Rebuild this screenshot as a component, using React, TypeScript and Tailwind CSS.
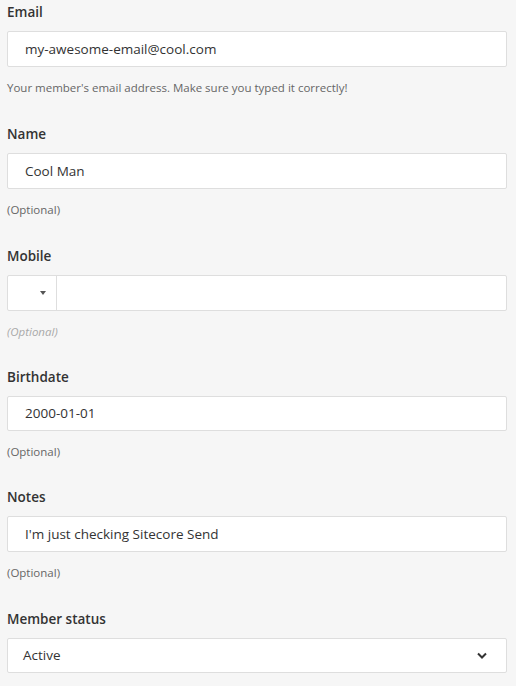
interface FieldProps {
  label: string
  children: React.ReactNode
  help?: string
  helpMuted?: boolean
  gap?: string
}

function Field({ label, children, help, helpMuted, gap = "mb-[28px]" }: FieldProps) {
  return (
    <div className={gap}>
      <div className="h-5 text-[13.5px] leading-5 font-semibold text-[#333]">{label}</div>
      <div className="mt-[9px]">{children}</div>
      {help && (
        <div
          className={
            helpMuted
              ? "mt-[13px] text-[11.5px] leading-4 italic text-[#a9a9a9]"
              : "mt-[13px] text-[11.5px] leading-4 text-[#666]"
          }
        >
          {help}
        </div>
      )}
    </div>
  )
}

function TextBox({ value, short }: { value: string; short?: boolean }) {
  return (
    <div
      className={
        (short ? "h-[35px] " : "h-9 ") +
        "flex items-center bg-white border border-[#dedede] rounded-[2px] pl-[17px] text-[13.5px] text-[#333]"
      }
    >
      {value}
    </div>
  )
}

export default function App() {
  return (
    <div
      className="min-h-screen bg-[#f6f6f6] pl-[7px] pr-[9px] pt-[2px]"
      style={{ fontFamily: '"Open Sans", "Noto Sans", sans-serif' }}
    >
      <Field label="Email" help="Your member's email address. Make sure you typed it correctly!">
        <TextBox value="my-awesome-email@cool.com" />
      </Field>

      <Field label="Name" help="(Optional)">
        <TextBox value="Cool Man" />
      </Field>

      <Field label="Mobile" help="(Optional)" helpMuted gap="mb-[27px]">
        <div className="h-9 flex bg-white border border-[#dedede] rounded-[2px]">
          <div className="w-[49px] flex items-center justify-end pr-[10px] border-r border-[#dedede]">
            <svg width="6" height="4" viewBox="0 0 6 4">
              <path d="M0 0h6L3 4z" fill="#555" />
            </svg>
          </div>
          <div className="flex-1" />
        </div>
      </Field>

      <Field label="Birthdate" help="(Optional)" gap="mb-[27px]">
        <TextBox value="2000-01-01" short />
      </Field>

      <Field label="Notes" help="(Optional)">
        <TextBox value="I'm just checking Sitecore Send" />
      </Field>

      <Field label="Member status">
        <div className="h-[35px] flex items-center justify-between bg-white border border-[#dedede] rounded-[2px] pl-[15px] pr-[19px] text-[13.5px] text-[#333]">
          <span>Active</span>
          <svg width="10" height="7" viewBox="0 0 10 7">
            <path d="M1 1.5l4 4 4-4" fill="none" stroke="#333" strokeWidth="2" />
          </svg>
        </div>
      </Field>
    </div>
  )
}
